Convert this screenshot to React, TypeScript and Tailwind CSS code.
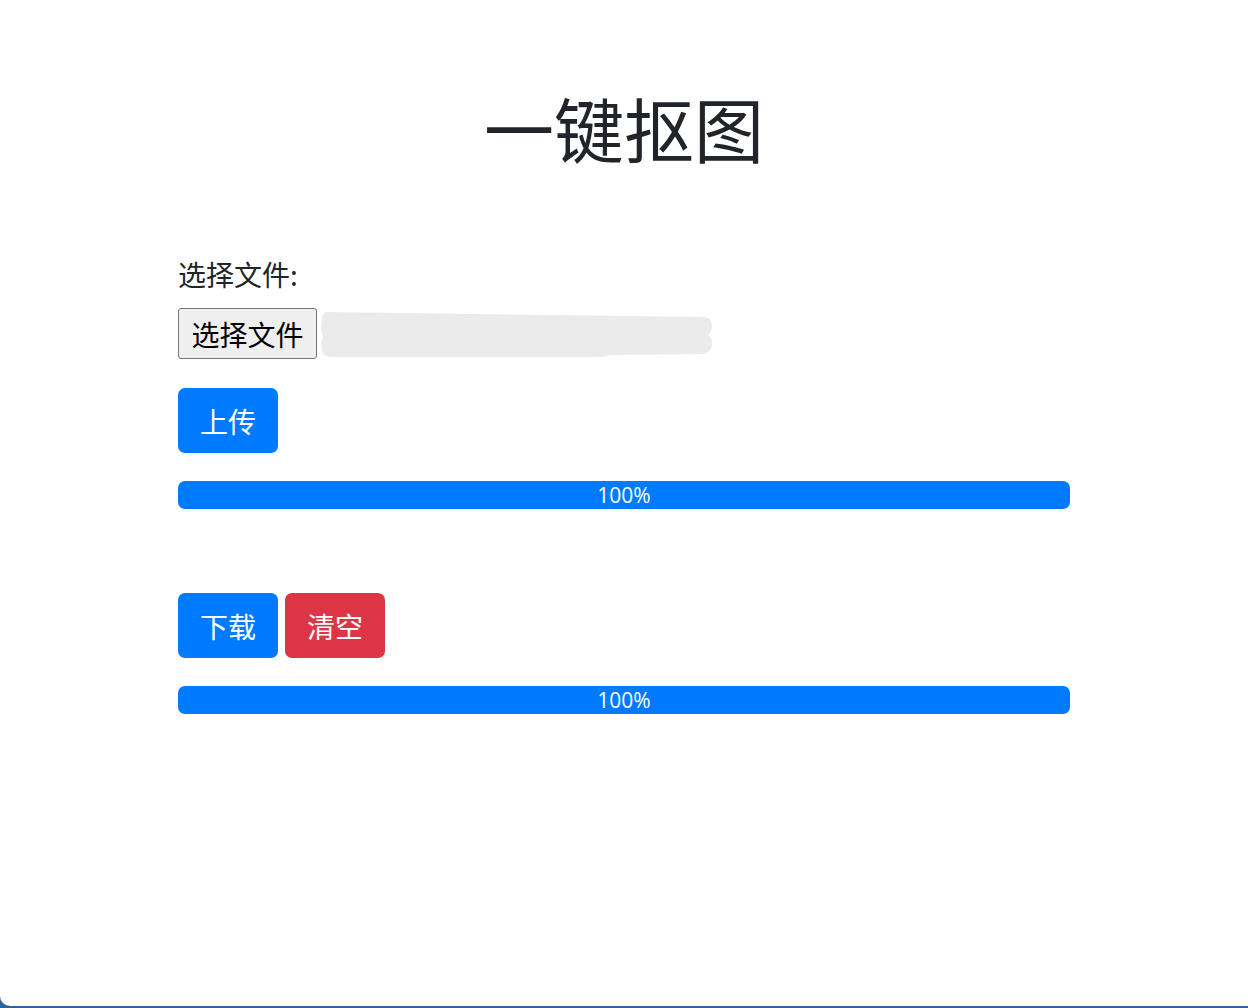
import React from 'react';

const cjk = { fontFamily: '"Noto Sans CJK SC", "Noto Sans", sans-serif' };

const Progress: React.FC<{ value: number }> = ({ value }) => (
  <div className="w-full h-[28px] rounded-[7px] bg-[#e9ecef] overflow-hidden flex">
    <div
      className="h-full bg-[#007bff] text-white text-[21px] leading-[29px] text-center"
      style={{ width: `${value}%`, fontFamily: '"Open Sans", "Noto Sans", sans-serif' }}
    >
      {value}%
    </div>
  </div>
);

const Btn: React.FC<{ label: string; tone?: 'primary' | 'danger' }> = ({ label, tone = 'primary' }) => (
  <button
    className={`w-[100px] h-[65px] rounded-[7px] text-white text-[28px] leading-none ${
      tone === 'primary' ? 'bg-[#007bff]' : 'bg-[#dc3545]'
    }`}
    style={cjk}
  >
    {label}
  </button>
);

export default function App() {
  return (
    <div className="w-[1248px] h-[1008px] bg-[#2f63a0]">
      <div className="h-[1006px] bg-white rounded-bl-[10px] flex flex-col" style={cjk}>
        <div className="w-[892px] mx-auto flex flex-col text-[#212529]">
          <h1 className="mt-[86px] text-[70px] leading-[84px] font-normal text-center">一键抠图</h1>

          <label className="mt-[83px] text-[28px] leading-[42px]">选择文件:</label>

          <div className="mt-[13px] flex items-center gap-[3px]">
            <button className="h-[51px] w-[139px] bg-[#efefef] border border-[#767676] rounded-[3px] text-[28px] leading-none text-black">
              选择文件
            </button>
            <svg width="393" height="49" viewBox="0 0 393 49" className="block">
              <path
                d="M6 3 L385 8 Q392 9 392 17 Q392 23 388 26 Q393 30 392 37 Q390 44 382 45 L290 46 Q285 48 278 48 L12 48 Q2 48 2 41 Q0 32 3 28 Q0 21 2 11 Q3 3 6 3 Z"
                fill="#ebebeb"
              />
            </svg>
          </div>

          <div className="mt-[29px] flex">
            <Btn label="上传" />
          </div>

          <div className="mt-[28px]">
            <Progress value={100} />
          </div>

          <div className="mt-[84px] flex gap-[7px]">
            <Btn label="下载" />
            <Btn label="清空" tone="danger" />
          </div>

          <div className="mt-[28px]">
            <Progress value={100} />
          </div>
        </div>
      </div>
    </div>
  );
}
